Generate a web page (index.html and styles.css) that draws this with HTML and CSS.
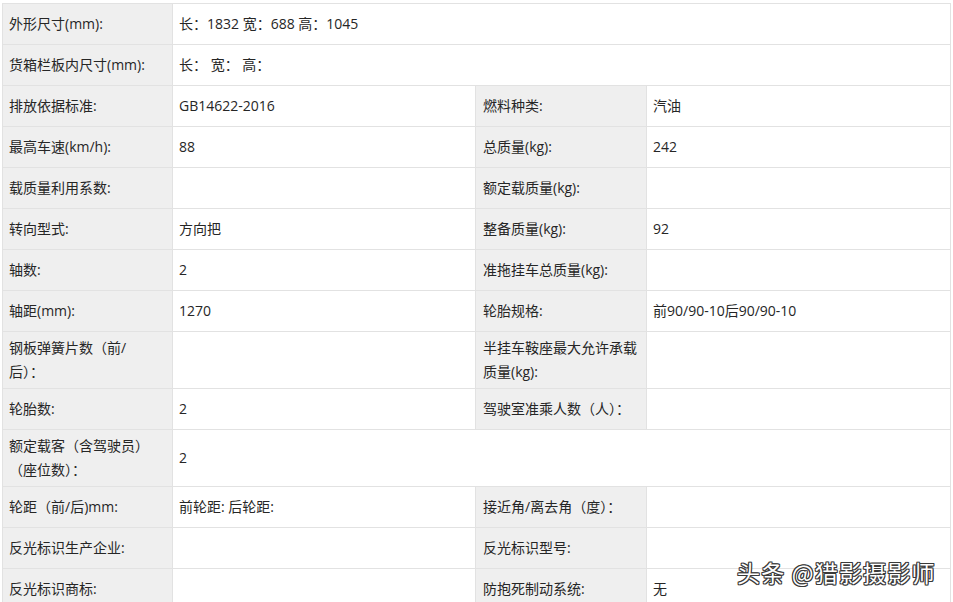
FILE: index.html
```html
<!DOCTYPE html>
<html lang="zh-CN">
<head>
<meta charset="utf-8">
<title>参数</title>
<link rel="stylesheet" href="styles.css">
</head>
<body>
<div class="page">
<table class="spec">
  <colgroup>
    <col class="c1"><col class="c2"><col class="c3"><col class="c4">
  </colgroup>
  <tr><td class="lb">外形尺寸(mm):</td><td colspan="3">长：1832 宽：688 高：1045</td></tr>
  <tr><td class="lb">货箱栏板内尺寸(mm):</td><td colspan="3">长： 宽： 高：</td></tr>
  <tr><td class="lb">排放依据标准:</td><td>GB14622-2016</td><td class="lb lb2">燃料种类:</td><td>汽油</td></tr>
  <tr><td class="lb">最高车速(km/h):</td><td>88</td><td class="lb lb2">总质量(kg):</td><td>242</td></tr>
  <tr><td class="lb">载质量利用系数:</td><td></td><td class="lb lb2">额定载质量(kg):</td><td></td></tr>
  <tr><td class="lb">转向型式:</td><td>方向把</td><td class="lb lb2">整备质量(kg):</td><td>92</td></tr>
  <tr><td class="lb">轴数:</td><td>2</td><td class="lb lb2">准拖挂车总质量(kg):</td><td></td></tr>
  <tr><td class="lb">轴距(mm):</td><td>1270</td><td class="lb lb2">轮胎规格:</td><td>前90/90-10后90/90-10</td></tr>
  <tr><td class="lb">钢板弹簧片数（前/<br>后）：</td><td></td><td class="lb lb2">半挂车鞍座最大允许承载<br>质量(kg):</td><td></td></tr>
  <tr><td class="lb">轮胎数:</td><td>2</td><td class="lb lb2">驾驶室准乘人数（人）：</td><td></td></tr>
  <tr><td class="lb">额定载客（含驾驶员）<br>（座位数）：</td><td colspan="3">2</td></tr>
  <tr><td class="lb">轮距（前/后)mm:</td><td>前轮距: 后轮距:</td><td class="lb lb2">接近角/离去角（度）：</td><td></td></tr>
  <tr><td class="lb">反光标识生产企业:</td><td></td><td class="lb lb2">反光标识型号:</td><td></td></tr>
  <tr><td class="lb">反光标识商标:</td><td></td><td class="lb lb2">防抱死制动系统:</td><td>无</td></tr>
</table>
<div class="watermark">头条 @猎影摄影师</div>
</div>
</body>
</html>
```
FILE: styles.css
```css
html, body {
  margin: 0;
  padding: 0;
  background: #ffffff;
  overflow: hidden;
}
.page {
  position: relative;
  width: 953px;
  height: 602px;
  overflow: hidden;
  padding: 3px 0 0 2px;
  box-sizing: border-box;
}
.spec {
  border-collapse: collapse;
  table-layout: fixed;
  width: 948px;
  font-family: "Open Sans", "Noto Sans CJK SC", sans-serif;
  font-size: 14px;
  color: #262626;
}
.c1 { width: 170px; }
.c2 { width: 303px; }
.c3 { width: 171px; }
.c4 { width: 304px; }
.spec td {
  height: 32px;
  padding: 4px 6px;
  line-height: 24px;
  border: 1px solid #e2e2e2;
  vertical-align: middle;
  background: #ffffff;
  white-space: nowrap;
  overflow: hidden;
}
.spec td.lb {
  background: #efefef;
}
.spec td.lb2 {
  padding-left: 7px;
}
.watermark {
  position: absolute;
  left: 737px;
  top: 557px;
  font-family: "Noto Sans CJK SC", sans-serif;
  font-size: 23px;
  line-height: 30px;
  color: #ffffff;
  letter-spacing: 1.2px;
  text-shadow: 1px 0 0 #3a3a3a, -1px 0 0 #3a3a3a, 0 1px 0 #3a3a3a, 0 -1px 0 #3a3a3a, 1px 1px 0 #3a3a3a, -1px -1px 0 #3a3a3a, 1px -1px 0 #3a3a3a, -1px 1px 0 #3a3a3a;
}
```
